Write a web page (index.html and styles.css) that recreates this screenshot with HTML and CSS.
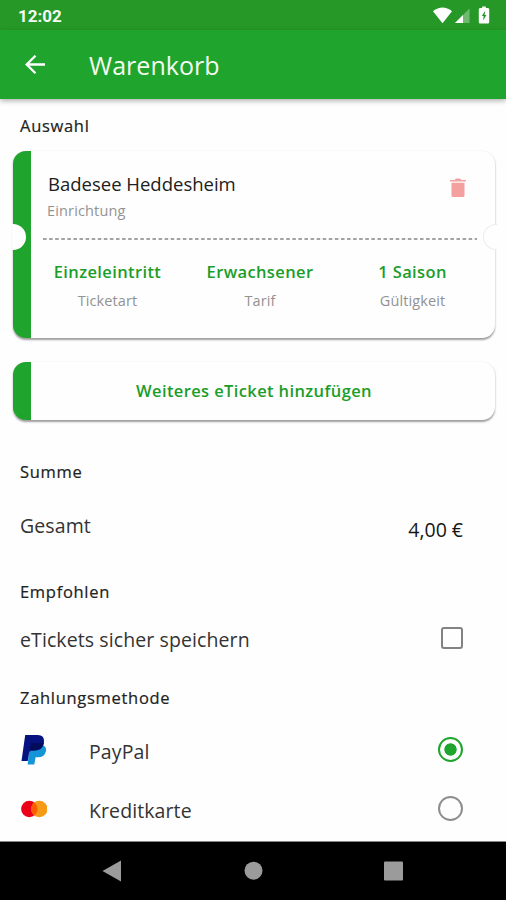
FILE: index.html
```html
<!DOCTYPE html>
<html lang="de">
<head>
<meta charset="utf-8">
<title>Warenkorb</title>
<link rel="stylesheet" href="styles.css">
</head>
<body>
<div class="status">
  <span class="clock">12:02</span>
  <svg class="status-icons" width="60" height="22" viewBox="0 0 60 22">
    <path fill="#fff" d="M1 7.300Q10.500-.2 20 7.300L10.500 19.200z"/>
    <path fill="#70b970" d="M37.500 4.500v14.500H23z"/>
    <path fill="#fff" d="M31 11V19H23z"/>
    <path fill="#fff" d="M48 4h2.200V2.500h3.600V4H56q1.200 0 1.200 1.500v12.500q0 1.500-1.200 1.500h-8q-1.200 0-1.200-1.500V5.500q0-1.500 1.200-1.500z"/>
    <path fill="#269827" d="M53.300 6.800l-3.500 5.300h1.900l-.6 4.500 3.400-5.600h-1.900z"/>
  </svg>
</div>
<header class="appbar">
  <svg class="back" width="20" height="20" viewBox="0 0 20 20" fill="none" stroke="#fff" stroke-width="2.300"><path d="M20 9.500H2M10.500 .700L1.700 9.500l8.800 8.800"/></svg>
  <h1 class="title">Warenkorb</h1>
</header>
<main class="content">
  <h2 class="section auswahl">Auswahl</h2>
  <section class="card ticket">
    <div class="head">
      <div>
        <div class="place">Badesee Heddesheim</div>
        <div class="place-label">Einrichtung</div>
      </div>
      <svg class="trash" width="16" height="20" viewBox="0 0 16 20" fill="#f4a09f"><path d="M0 2h4.500L6 .500h4L11.500 2H16v1.600H0zM1.500 4.800h13v12.800q0 1.500-1.500 1.500H3q-1.500 0-1.500-1.500z"/></svg>
    </div>
    <svg class="perforation" width="434" height="2"><path d="M0 1h434" stroke="#858585" stroke-width="1.500" stroke-dasharray="3.600 2.480"/></svg>
    <div class="facts">
      <div><div class="value">Einzeleintritt</div><div class="label">Ticketart</div></div>
      <div><div class="value">Erwachsener</div><div class="label">Tarif</div></div>
      <div><div class="value">1 Saison</div><div class="label">Gültigkeit</div></div>
    </div>
    <i class="notch left"></i><i class="notch right"></i>
  </section>
  <button class="card add"><span>Weiteres eTicket hinzufügen</span></button>
  <h2 class="section summe">Summe</h2>
  <div class="row total"><span class="gesamt">Gesamt</span><span class="price">4,00 €</span></div>
  <h2 class="section empfohlen">Empfohlen</h2>
  <div class="row save"><span class="save-text">eTickets sicher speichern</span><i class="checkbox"></i></div>
  <h2 class="section zahlung">Zahlungsmethode</h2>
  <div class="row pay">
    <svg class="brand" width="28" height="32" viewBox="0 0 28 32">
      <path fill="#1495d8" d="M10.500 11h13.300q4 2 3.100 6.200-1.200 6-8 6h-2.300l-1.300 7.300H8.700z"/>
      <path fill="#06127f" d="M6.200 1h12.500q7 0 6.300 7.200-1.100 8.300-9.700 8.300h-3.300L10.200 18l-1.500 9H2.500z"/>
      <path fill="#030b5b" d="M12 9h12.900q-1.300 7.500-9.600 7.500h-4.500z"/>
    </svg>
    <span class="method">PayPal</span><i class="radio on"></i>
  </div>
  <div class="row pay">
    <svg class="brand" width="28" height="32" viewBox="0 0 28 32">
      <circle cx="10.300" cy="16" r="8.200" fill="#eb0018"/><circle cx="20.300" cy="16" r="8.200" fill="#f59b17"/>
      <path fill="#fb5d05" d="M15.300 9.500a8.200 8.200 0 0 1 0 13a8.200 8.200 0 0 1 0-13z"/>
    </svg>
    <span class="method">Kreditkarte</span><i class="radio"></i>
  </div>
</main>
<nav class="navbar">
  <svg width="506" height="58" viewBox="0 0 506 58" fill="#9b9b9b">
    <path d="M121 18.500v21l-18.500-10.500z"/><circle cx="253.500" cy="28.700" r="9"/><rect x="384" y="19.500" width="19" height="19" rx="1"/>
  </svg>
</nav>
</body>
</html>
```
FILE: styles.css
```css
* { box-sizing: border-box; }
body {
  margin: 0;
  width: 506px;
  height: 900px;
  overflow: hidden;
  display: flex;
  flex-direction: column;
  background: #fefefe;
  font-family: "Open Sans", "Noto Sans", sans-serif;
  color: #222;
}
h1, h2 { margin: 0; font-weight: 400; }
span, h1, h2 { white-space: nowrap; }
.status {
  height: 30px;
  flex: none;
  display: flex;
  justify-content: space-between;
  padding: 4px 14px 0 18px;
  background: #269827;
}
.clock { font: 700 17px/24px Roboto, sans-serif; color: #f4fbf4; }
.appbar {
  height: 69px;
  flex: none;
  display: flex;
  align-items: center;
  padding-left: 25px;
  background: #1fa42d;
  box-shadow: 0 2px 5px rgba(0, 0, 0, .3);
}
.title { margin-left: 44px; font-size: 25px; line-height: 34px; letter-spacing: .05px; color: #f3fbf0; }
.content { height: 743px; flex: none; overflow: hidden; border-bottom: 1px solid #888; position: relative; z-index: -1; }
.section { padding-left: 20px; font-size: 16.500px; line-height: 24px; letter-spacing: .7px; -webkit-text-stroke: .2px #222; }
.auswahl { margin-top: 15px; }
.card {
  display: block;
  position: relative;
  width: 482px;
  margin-left: 13px;
  border: 0;
  border-left: 18px solid #1fa42d;
  border-radius: 13px;
  background: #fefefe;
  box-shadow: 0 1.5px 2px rgba(0, 0, 0, .38);
}
.ticket { height: 187px; margin-top: 13px; }
.head { display: flex; justify-content: space-between; padding: 20px 29px 0 17px; height: 87px; }
.place { font-size: 18.500px; line-height: 26px; color: #202020; }
.place-label { font-size: 14.500px; line-height: 22px; margin: 3px 0 0 -1px; letter-spacing: .15px; color: #939393; }
.trash { margin-top: 7px; }
.perforation { display: block; margin-left: 12px; }
.facts { display: grid; grid-template-columns: 153px 152px 153px; text-align: center; padding-top: 20px; }
.value { font-size: 16.500px; line-height: 24px; font-weight: 600; letter-spacing: .38px; color: #1b9d29; }
.label { font-size: 14.500px; line-height: 22px; margin-top: 6px; letter-spacing: .1px; color: #929292; }
.notch { position: absolute; top: 73px; height: 26px; background: #fefefe; }
.left { left: -19px; width: 13.500px; border-radius: 0 13px 13px 0; }
.right { right: -2px; width: 14px; border: 1.500px solid #ececec; border-right: 0; border-radius: 13px 0 0 13px; }
.add { height: 58px; margin-top: 24px; padding: 0 18px 1px 0; text-align: center; font: 600 16.500px/24px "Open Sans", sans-serif; letter-spacing: .38px; color: #1b9d29; }
.summe { margin-top: 40px; }
.row { display: flex; align-items: center; padding: 0 43px 0 20px; }
.total { justify-content: space-between; height: 48px; margin-top: 22px; }
.gesamt, .save-text, .method { font-size: 19.500px; line-height: 28px; letter-spacing: .1px; color: #333; }
.gesamt { margin-top: -8px; }
.price { font-size: 19.500px; line-height: 28px; color: #151515; }
.empfohlen { margin-top: 26px; }
.save { justify-content: space-between; height: 46px; margin-top: 11px; }
.save-text { margin-top: 3px; }
.checkbox { width: 22px; height: 22px; border: 2px solid #828282; border-radius: 3px; }
.zahlung { margin-top: 25px; }
.pay { height: 59px; }
.zahlung + .pay { margin-top: 10px; }
.brand { margin-left: -1px; }
.method { margin: 4px 0 0 42px; }
.radio { width: 25px; height: 25px; margin-left: auto; border: 2px solid #8e8e8e; border-radius: 50%; }
.on { border-color: #1fa42d; background: radial-gradient(circle, #1fa42d 5.800px, transparent 6.500px); }
.navbar { height: 58px; flex: none; background: #000; }
.navbar svg { display: block; }
```
